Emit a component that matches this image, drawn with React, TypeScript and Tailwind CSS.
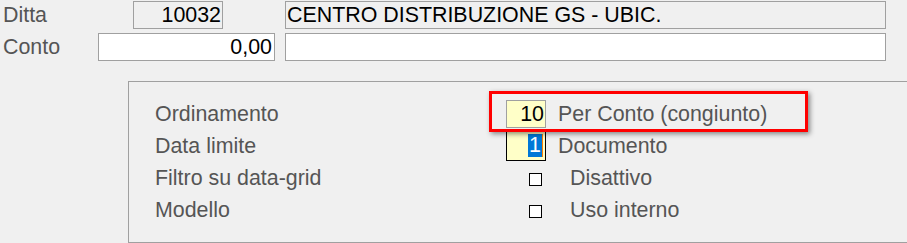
export default function App() {
  const font = { fontFamily: '"Liberation Sans", Arial, sans-serif' };
  return (
    <div
      className="w-[907px] h-[243px] overflow-hidden bg-[#f0f0f0] text-[21.4px] text-[#555555] flex flex-col"
      style={font}
    >
      {/* Row 1 */}
      <div className="flex mt-px h-[28px]">
        <div className="w-[133px] pl-[3px] leading-[28px]">Ditta</div>
        <div className="w-[90px] h-[28px] border border-[#a0a0a0] bg-[#f0f0f0] text-black text-right pr-px leading-[26px]">
          10032
        </div>
        <div className="ml-[62px] w-[601px] h-[28px] border border-[#a0a0a0] bg-[#f0f0f0] text-black pl-px leading-[26px]">
          CENTRO DISTRIBUZIONE GS - UBIC.
        </div>
      </div>
      {/* Row 2 */}
      <div className="flex mt-[4px] h-[28px]">
        <div className="w-[98px] pl-[3px] leading-[28px]">Conto</div>
        <div className="w-[177px] h-[28px] border border-[#a0a0a0] bg-white text-black text-right pr-[2px] leading-[26px]">
          0,00
        </div>
        <div className="ml-[10px] w-[601px] h-[28px] border border-[#a0a0a0] bg-white" />
      </div>
      {/* Panel */}
      <div className="ml-[128px] mt-[20px] h-[162px] border-l border-t border-b border-[#a0a0a0] pt-[16px] pl-[26px] relative">
        {/* Red highlight */}
        <div className="absolute left-[360px] top-[9px] w-[319px] h-[41px] border-[3px] border-[#ff0000] shadow-[2px_2px_5px_rgba(0,0,0,0.45)]" />
        <div className="flex h-[32px] items-center">
          <div className="w-[351px] leading-[32px]">Ordinamento</div>
          <div className="w-[40px] h-[28px] border border-[#a0a0a0] bg-[#ffffc8] text-black text-right pr-px leading-[26px]">
            10
          </div>
          <div className="ml-[12px] leading-[32px]">Per Conto (congiunto)</div>
        </div>
        <div className="flex h-[32px] items-start">
          <div className="w-[351px] leading-[32px]">Data limite</div>
          <div className="w-[40px] h-[32px] -mt-[1px] border border-black bg-[#ffffc8] flex justify-end items-center pr-[2px]">
            <span className="bg-[#0078d7] text-white leading-[23px] h-[23px] px-px">1</span>
            <span className="w-px h-[23px] bg-[#ff8000]" />
          </div>
          <div className="ml-[12px] leading-[32px]">Documento</div>
        </div>
        <div className="flex h-[32px] items-center">
          <div className="w-[374px] leading-[32px]">Filtro su data-grid</div>
          <div className="w-[13px] h-[13px] mt-[2px] border border-black bg-white" />
          <div className="ml-[28px] leading-[32px]">Disattivo</div>
        </div>
        <div className="flex h-[32px] items-center">
          <div className="w-[374px] leading-[32px]">Modello</div>
          <div className="w-[13px] h-[13px] mt-[2px] border border-black bg-white" />
          <div className="ml-[28px] leading-[32px]">Uso interno</div>
        </div>
      </div>
    </div>
  );
}
